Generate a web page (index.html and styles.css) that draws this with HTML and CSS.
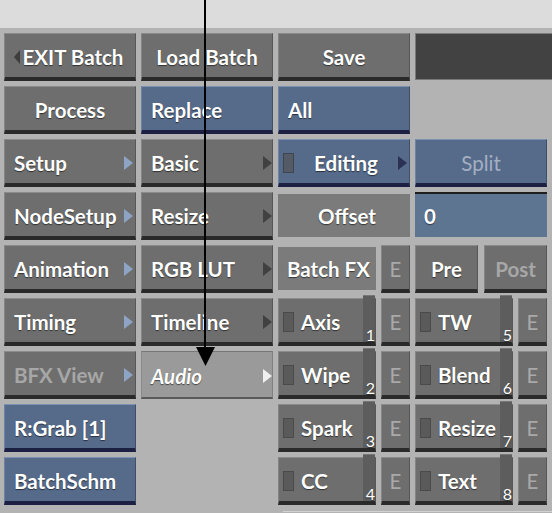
FILE: index.html
```html
<!DOCTYPE html>
<html>
<head>
<meta charset="utf-8">
<link rel="stylesheet" href="styles.css">
</head>
<body>
<div class="top"></div>
<div class="panel">
  <!-- row 1 -->
  <div class="btn g center back">EXIT Batch</div>
  <div class="btn g center">Load Batch</div>
  <div class="btn g center">Save</div>
  <div class="darkbox"></div>
  <!-- row 2 -->
  <div class="btn g center">Process</div>
  <div class="btn b">Replace</div>
  <div class="btn b">All</div>
  <div></div>
  <!-- row 3 -->
  <div class="btn g sub c1">Setup</div>
  <div class="btn g sub c2">Basic</div>
  <div class="btn b edit"><span class="ind"></span><span class="lbl">Editing</span></div>
  <div class="btn b center dimblue">Split</div>
  <!-- row 4 -->
  <div class="btn g sub c1">NodeSetup</div>
  <div class="btn g sub c2">Resize</div>
  <div class="flat center">Offset</div>
  <div class="field">0</div>
  <!-- row 5 -->
  <div class="btn g sub c1">Animation</div>
  <div class="btn g sub c2">RGB LUT</div>
  <div class="pair"><div class="flat fx">Batch FX</div><div class="btn g e">E</div></div>
  <div class="pair half"><div class="btn g center">Pre</div><div class="btn g center dim">Post</div></div>
  <!-- row 6 -->
  <div class="btn g sub c1">Timing</div>
  <div class="btn g sub c2">Timeline</div>
  <div class="pair"><div class="btn g node"><span class="ind"></span><span class="lbl">Axis</span><span class="tab">1</span></div><div class="btn g e">E</div></div>
  <div class="pair"><div class="btn g node"><span class="ind"></span><span class="lbl">TW</span><span class="tab">5</span></div><div class="btn g e">E</div></div>
  <!-- row 7 -->
  <div class="btn g sub c1 dim">BFX View</div>
  <div class="btn audio sub c2">Audio</div>
  <div class="pair"><div class="btn g node"><span class="ind"></span><span class="lbl">Wipe</span><span class="tab">2</span></div><div class="btn g e">E</div></div>
  <div class="pair"><div class="btn g node"><span class="ind"></span><span class="lbl">Blend</span><span class="tab">6</span></div><div class="btn g e">E</div></div>
  <!-- row 8 -->
  <div class="btn b">R:Grab [1]</div>
  <div></div>
  <div class="pair"><div class="btn g node"><span class="ind"></span><span class="lbl">Spark</span><span class="tab">3</span></div><div class="btn g e">E</div></div>
  <div class="pair"><div class="btn g node"><span class="ind"></span><span class="lbl">Resize</span><span class="tab">7</span></div><div class="btn g e">E</div></div>
  <!-- row 9 -->
  <div class="btn b">BatchSchm</div>
  <div></div>
  <div class="pair"><div class="btn g node"><span class="ind"></span><span class="lbl">CC</span><span class="tab">4</span></div><div class="btn g e">E</div></div>
  <div class="pair"><div class="btn g node"><span class="ind"></span><span class="lbl">Text</span><span class="tab">8</span></div><div class="btn g e">E</div></div>
</div>
<div class="bottomline"></div>
<svg class="pointer" width="552" height="513" viewBox="0 0 552 513">
  <line x1="205" y1="0" x2="205" y2="350" stroke="#000" stroke-width="2"/>
  <polygon points="196,347 215,347 205.5,366" fill="#000"/>
</svg>
</body>
</html>
```
FILE: styles.css
```css
html, body {
  margin: 0;
  padding: 0;
}
body {
  width: 552px;
  height: 513px;
  overflow: hidden;
  position: relative;
  background: #b3b3b3;
  font-family: Lato, "Liberation Sans", sans-serif;
}
.top {
  height: 28px;
  background: #dcdcdc;
}
.panel {
  display: grid;
  grid-template-columns: repeat(4, 132px);
  grid-auto-rows: 48px;
  column-gap: 5px;
  row-gap: 5px;
  padding: 5px 0 0 4px;
}
.btn {
  box-sizing: border-box;
  display: flex;
  align-items: center;
  min-width: 0;
  color: #fff;
  font-weight: 700;
  font-size: 20.5px;
  padding: 2px 6px 0 9px;
  border: 1px solid;
  border-bottom-width: 4px;
  white-space: nowrap;
  text-shadow: 0 1px 1px rgba(0, 0, 0, 0.55);
}
.g {
  background: #6e6e6e;
  border-color: #8b8b8b #575757 #2a2a2a #858585;
}
.b {
  background: #566a8a;
  border-color: #7c92b2 #3f4f6a #1c2042 #6d83a3;
}
.center {
  justify-content: center;
  padding-left: 6px;
}
.dim {
  color: #a7a7a7;
  text-shadow: none;
}
.dimblue {
  color: #a3afc2;
  font-weight: 400;
  text-shadow: none;
}
.back::before {
  content: "";
  border-right: 6px solid #3d3d3d;
  border-top: 7px solid transparent;
  border-bottom: 7px solid transparent;
  margin-right: 3px;
  margin-left: -3px;
}
.sub::after {
  content: "";
  margin-left: auto;
  border-left: 9px solid #8ea4c4;
  border-top: 7px solid transparent;
  border-bottom: 7px solid transparent;
}
.sub.c1 {
  padding-right: 2px;
}
.sub.c2 {
  padding-right: 0;
}
.sub.c2::after {
  border-left-color: #414141;
}
.audio {
  background: #9a9a9a;
  border-color: #777 #808080 #5a5a5a #8a8a8a;
  border-bottom-width: 2px;
  font-style: italic;
}
.audio.sub::after {
  border-left-color: #f0f0f0;
}
.darkbox {
  box-sizing: border-box;
  background: #424242;
  border: 1px solid #7a7a7a;
  margin-right: -6px;
  height: 47px;
}
.ind {
  box-sizing: border-box;
  width: 11px;
  height: 20px;
  background: #5a5a5a;
  border: 1px solid #4a4a4a;
  flex: none;
}
.edit {
  padding-left: 4px;
  padding-right: 2px;
}
.edit .lbl {
  flex: 1;
  text-align: center;
}
.edit::after {
  content: "";
  border-left: 9px solid #2a3152;
  border-top: 7px solid transparent;
  border-bottom: 7px solid transparent;
}
.edit .ind {
  background: #555b66;
  border-color: #3f4450;
}
.flat {
  box-sizing: border-box;
  display: flex;
  align-items: center;
  background: #7b7b7b;
  color: #fff;
  font-weight: 700;
  font-size: 20.5px;
  margin-top: 2px;
  height: 43px;
  text-shadow: 0 1px 1px rgba(0, 0, 0, 0.55);
  white-space: nowrap;
}
.flat.center {
  justify-content: center;
}
.fx {
  flex: 1;
  padding-left: 9px;
}
.field {
  box-sizing: border-box;
  display: flex;
  align-items: center;
  background: #5e7592;
  border-top: 2px solid #1e1e1e;
  height: 45px;
  padding-left: 9px;
  color: #fff;
  font-weight: 700;
  font-size: 20.5px;
  text-shadow: 0 1px 1px rgba(0, 0, 0, 0.55);
}
.pair {
  display: flex;
  gap: 5px;
  min-width: 0;
}
.pair.half {
  gap: 6px;
}
.pair.half .btn {
  flex: 1;
}
.e {
  width: 29px;
  flex: none;
  justify-content: center;
  padding: 2px 0 0;
  font-weight: 400;
  color: #a9a9a9;
  text-shadow: none;
}
.node {
  flex: 1;
  padding: 0 0 0 4px;
  align-items: stretch;
}
.node .ind {
  align-self: center;
  margin-top: 2px;
}
.node .lbl {
  flex: 1;
  display: flex;
  align-items: center;
  padding-left: 7px;
  padding-top: 2px;
}
.tab {
  width: 12px;
  flex: none;
  margin-top: -4px;
  background: #5d5d5d;
  border-top: 1px solid #777;
  display: flex;
  align-items: flex-end;
  justify-content: flex-end;
  font-size: 16px;
  font-weight: 400;
  line-height: 15px;
  padding-bottom: 0;
  overflow: visible;
}
.bottomline {
  margin: 6px 0 0 283px;
  height: 1px;
  background: #d2d2d2;
}
.pointer {
  position: absolute;
  left: 0;
  top: 0;
  pointer-events: none;
}
```
